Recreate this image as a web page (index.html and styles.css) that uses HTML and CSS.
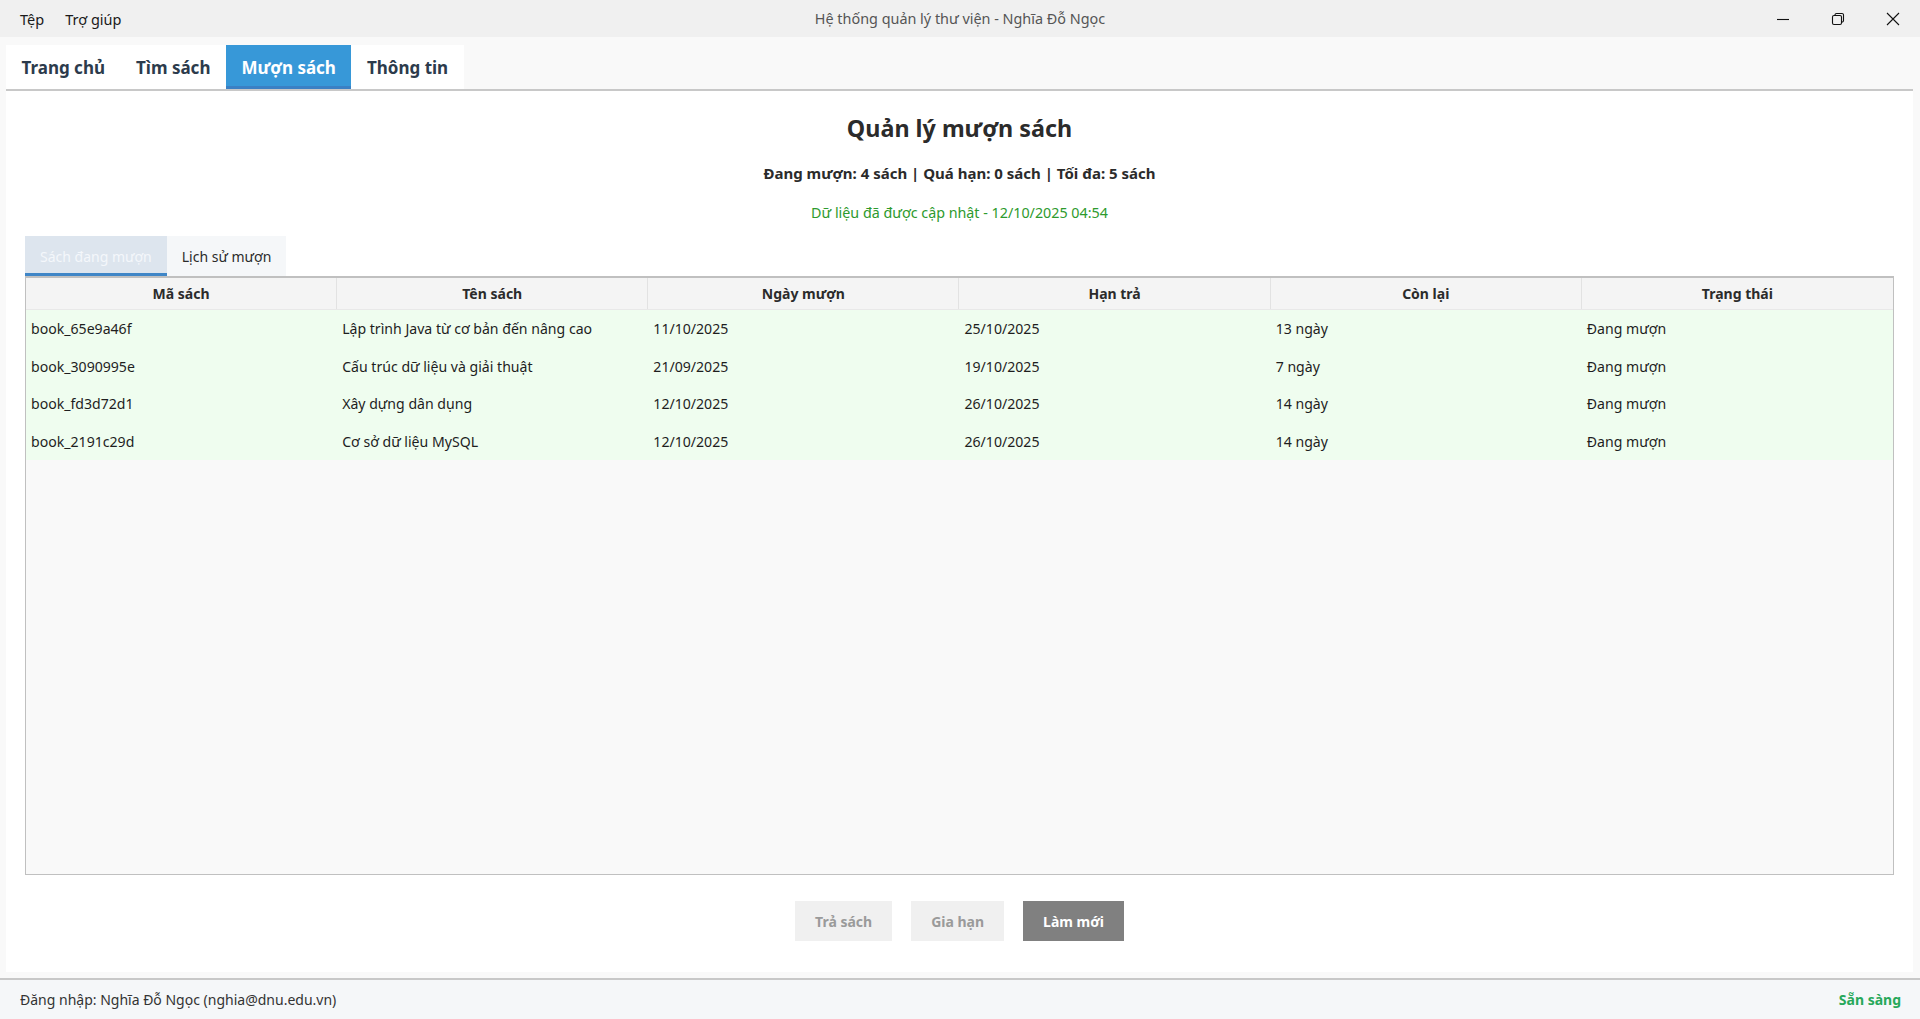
FILE: index.html
```html
<!DOCTYPE html>
<html lang="vi">
<head>
<meta charset="utf-8">
<title>Hệ thống quản lý thư viện</title>
<link rel="stylesheet" href="styles.css">
</head>
<body>
<div class="window">
  <header class="titlebar">
    <nav class="menu">
      <span class="menu-item">Tệp</span>
      <span class="menu-item">Trợ giúp</span>
    </nav>
    <div class="title">Hệ thống quản lý thư viện - Nghĩa Đỗ Ngọc</div>
    <div class="controls">
      <span class="ctl">
        <svg width="14" height="14" viewBox="0 0 14 14"><path d="M1 7.5h12" stroke="#111" stroke-width="1.1" fill="none"/></svg>
      </span>
      <span class="ctl">
        <svg width="14" height="14" viewBox="0 0 14 14" fill="none" stroke="#111" stroke-width="1.1"><rect x="1.5" y="3.5" width="9" height="9" rx="1.5"/><path d="M4 3.5V3a1.5 1.5 0 0 1 1.5-1.5h5.5A1.5 1.5 0 0 1 12.5 3v5.5A1.5 1.5 0 0 1 11 10h-0.5"/></svg>
      </span>
      <span class="ctl">
        <svg width="14" height="14" viewBox="0 0 14 14"><path d="M1 1l12 12M13 1L1 13" stroke="#111" stroke-width="1.1" fill="none"/></svg>
      </span>
    </div>
  </header>

  <main class="main">
    <div class="tabbar">
      <div class="tabs">
        <span class="tab">Trang chủ</span>
        <span class="tab">Tìm sách</span>
        <span class="tab active">Mượn sách</span>
        <span class="tab">Thông tin</span>
      </div>
    </div>

    <section class="panel">
      <h1 class="heading">Quản lý mượn sách</h1>
      <p class="stats">Đang mượn: 4 sách | Quá hạn: 0 sách | Tối đa: 5 sách</p>
      <p class="updated">Dữ liệu đã được cập nhật - 12/10/2025 04:54</p>

      <div class="subtabs">
        <span class="subtab active">Sách đang mượn</span>
        <span class="subtab">Lịch sử mượn</span>
      </div>

      <div class="table">
        <div class="thead">
          <div class="th">Mã sách</div>
          <div class="th">Tên sách</div>
          <div class="th">Ngày mượn</div>
          <div class="th">Hạn trả</div>
          <div class="th">Còn lại</div>
          <div class="th">Trạng thái</div>
        </div>
        <div class="tbody">
          <div class="tr">
            <div class="td">book_65e9a46f</div>
            <div class="td">Lập trình Java từ cơ bản đến nâng cao</div>
            <div class="td">11/10/2025</div>
            <div class="td">25/10/2025</div>
            <div class="td">13 ngày</div>
            <div class="td">Đang mượn</div>
          </div>
          <div class="tr">
            <div class="td">book_3090995e</div>
            <div class="td">Cấu trúc dữ liệu và giải thuật</div>
            <div class="td">21/09/2025</div>
            <div class="td">19/10/2025</div>
            <div class="td">7 ngày</div>
            <div class="td">Đang mượn</div>
          </div>
          <div class="tr">
            <div class="td">book_fd3d72d1</div>
            <div class="td">Xây dựng dân dụng</div>
            <div class="td">12/10/2025</div>
            <div class="td">26/10/2025</div>
            <div class="td">14 ngày</div>
            <div class="td">Đang mượn</div>
          </div>
          <div class="tr">
            <div class="td">book_2191c29d</div>
            <div class="td">Cơ sở dữ liệu MySQL</div>
            <div class="td">12/10/2025</div>
            <div class="td">26/10/2025</div>
            <div class="td">14 ngày</div>
            <div class="td">Đang mượn</div>
          </div>
        </div>
      </div>

      <div class="actions">
        <button class="btn">Trả sách</button>
        <button class="btn">Gia hạn</button>
        <button class="btn primary">Làm mới</button>
      </div>
    </section>
  </main>

  <footer class="statusbar">
    <span class="user">Đăng nhập: Nghĩa Đỗ Ngọc (nghia@dnu.edu.vn)</span>
    <span class="ready">Sẵn sàng</span>
  </footer>
</div>
</body>
</html>
```

FILE: styles.css
```css
* { box-sizing: border-box; }
html, body { margin: 0; padding: 0; }
body {
  font-family: "Noto Sans", "Open Sans", sans-serif;
  color: #222;
  background: #f9f9f9;
}
.window {
  width: 1920px;
  height: 1019px;
  display: flex;
  flex-direction: column;
}

/* title bar */
.titlebar {
  height: 37px;
  flex: none;
  background: #f0f0f0;
  display: grid;
  grid-template-columns: 1fr auto 1fr;
  align-items: center;
}
.menu { display: flex; gap: 21px; padding-left: 20px; font-size: 14.5px; color: #1a1a1a; }
.title { font-size: 14.4px; color: #555; }
.controls { display: flex; justify-content: flex-end; padding-right: 0; }
.ctl { width: 55px; height: 37px; display: flex; align-items: center; justify-content: center; }
.ctl svg { display: block; }

/* main */
.main {
  flex: 1;
  display: flex;
  flex-direction: column;
  padding: 8px 7px 6px 6px;
  background: #f9f9f9;
}
.tabbar {
  height: 46px;
  flex: none;
  border-bottom: 2px solid #c8c8c8;
  display: flex;
}
.tabs { display: flex; background: #fff; }
.tab {
  height: 44px;
  padding: 0 15.5px;
  display: flex;
  align-items: center;
  font-size: 17px;
  font-weight: 700;
  color: #2c3b4c;
}
.tab.active {
  background: #3798d8;
  color: #fff;
  box-shadow: inset 0 -3px 0 #3a80c4;
}

.panel {
  flex: 1;
  background: #fff;
  display: flex;
  flex-direction: column;
  padding: 20px 19px 31px 19px;
}
.heading {
  margin: 0;
  text-align: center;
  font-size: 23.3px;
  line-height: 34px;
  font-weight: 700;
  color: #2b2b2b;
}
.stats {
  margin: 17px 0 0;
  text-align: center;
  font-size: 15px;
  line-height: 22px;
  font-weight: 700;
  color: #2b2b2b;
}
.updated {
  margin: 19px 0 0;
  text-align: center;
  font-size: 14.3px;
  line-height: 20px;
  color: #2d9a2d;
}
.subtabs {
  margin-top: 13px;
  display: flex;
  height: 40px;
  flex: none;
}
.subtab {
  display: flex;
  align-items: center;
  padding: 0 15px;
  font-size: 14px;
  background: #f5f7f9;
  color: #2b2b2b;
}
.subtab.active {
  background: #dde5ee;
  color: #f4f7fb;
  box-shadow: inset 0 -3px 0 #3f86c7;
}

/* table */
.table {
  flex: 1;
  display: flex;
  flex-direction: column;
  border: 1px solid #c0c0c0;
  border-top-width: 2px;
  background: #f9f9f9;
}
.thead {
  display: grid;
  grid-template-columns: repeat(6, 1fr);
  height: 32px;
  background: #f4f4f4;
  border-bottom: 1px solid #e8e8e8;
}
.th {
  display: flex;
  align-items: center;
  justify-content: center;
  font-size: 14px;
  font-weight: 700;
  color: #2b2b2b;
  border-right: 1px solid #e2e2e2;
}
.th:last-child { border-right: none; }
.tbody { display: flex; flex-direction: column; }
.tr {
  display: grid;
  grid-template-columns: repeat(6, 1fr);
  height: 37.5px;
  background: #effdef;
}
.td {
  display: flex;
  align-items: center;
  padding-left: 5px;
  font-size: 14.1px;
  color: #1e1e1e;
}

/* actions */
.actions {
  margin-top: 26px;
  display: flex;
  justify-content: center;
  gap: 19px;
}
.btn {
  height: 40px;
  padding: 0 20px;
  border: none;
  background: #f0f0f0;
  font-family: inherit;
  font-size: 14px;
  font-weight: 700;
  color: #9a9a9a;
}
.btn.primary { background: #808080; color: #fff; }

/* status */
.statusbar {
  height: 41px;
  flex: none;
  border-top: 2px solid #c8c8c8;
  background: #f5f7f9;
  display: flex;
  align-items: center;
  justify-content: space-between;
  padding: 0 19px 0 20px;
  font-size: 14px;
}
.user { color: #333; }
.ready { color: #27a85a; font-weight: 700; }
```
